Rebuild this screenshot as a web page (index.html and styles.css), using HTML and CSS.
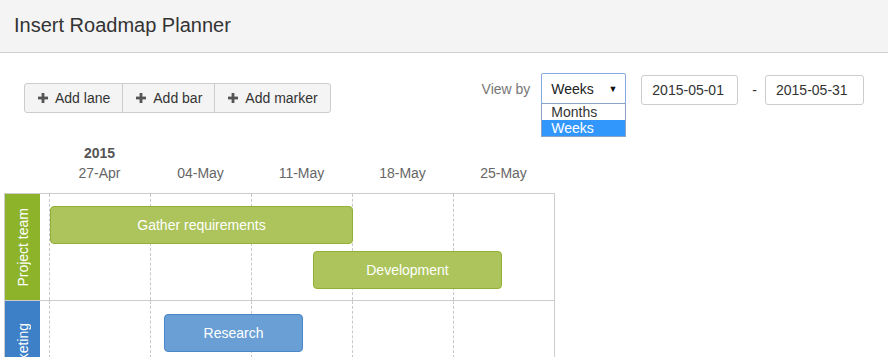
FILE: index.html
```html
<!DOCTYPE html>
<html>
<head>
<meta charset="utf-8">
<title>Insert Roadmap Planner</title>
<link rel="stylesheet" href="styles.css">
</head>
<body>
<header class="top">Insert Roadmap Planner</header>
<main class="main">
  <div class="toolbar">
    <div class="btn-group">
      <button class="btn"><svg class="plus" viewBox="0 0 10 10"><rect x="3.6" y="0" width="2.8" height="10"/><rect x="0" y="3.6" width="10" height="2.8"/></svg>Add lane</button>
      <button class="btn"><svg class="plus" viewBox="0 0 10 10"><rect x="3.6" y="0" width="2.8" height="10"/><rect x="0" y="3.6" width="10" height="2.8"/></svg>Add bar</button>
      <button class="btn"><svg class="plus" viewBox="0 0 10 10"><rect x="3.6" y="0" width="2.8" height="10"/><rect x="0" y="3.6" width="10" height="2.8"/></svg>Add marker</button>
    </div>
    <div class="controls">
      <span class="label">View by</span>
      <div class="select">
        <span>Weeks</span><span class="arrow">▼</span>
        <ul class="options">
          <li>Months</li>
          <li class="selected">Weeks</li>
        </ul>
      </div>
      <div class="date date-from">2015-05-01</div>
      <span class="dash">-</span>
      <div class="date date-to">2015-05-31</div>
    </div>
  </div>

  <div class="scale">
    <div class="scale-row">
      <div class="year">2015</div><div></div><div></div><div></div><div></div>
    </div>
    <div class="scale-row">
      <div>27-Apr</div><div>04-May</div><div>11-May</div><div>18-May</div><div>25-May</div>
    </div>
  </div>

  <div class="grid">
    <div class="lane">
      <div class="lane-label green"><span>Project team</span></div>
      <div class="lane-area">
        <div class="cols"><div></div><div></div><div></div><div></div><div></div></div>
        <div class="bars">
          <div class="bar green-bar" style="margin-left:10px;width:303px">Gather requirements</div>
          <div class="bar green-bar" style="margin-left:273px;width:189px">Development</div>
        </div>
      </div>
    </div>
    <div class="lane">
      <div class="lane-label blue"><span>Marketing</span></div>
      <div class="lane-area">
        <div class="cols"><div></div><div></div><div></div><div></div><div></div></div>
        <div class="bars bars-2">
          <div class="bar blue-bar" style="margin-left:124px;width:139px">Research</div>
        </div>
      </div>
    </div>
  </div>
</main>
</body>
</html>
```
FILE: styles.css
```css
* { box-sizing: border-box; }
html, body {
  margin: 0;
  padding: 0;
  height: 357px;
  overflow: hidden;
  background: #fff;
  font-family: "Liberation Sans", Arial, sans-serif;
  font-size: 14px;
  color: #333;
}
.top {
  height: 53px;
  background: #f4f4f4;
  border-bottom: 1px solid #cfcfcf;
  padding: 14px 0 0 14px;
  font-size: 20px;
  line-height: 23px;
  color: #333;
}
.toolbar {
  display: flex;
  justify-content: space-between;
  align-items: flex-start;
  padding: 20px 24px 0 24px;
}
.btn-group {
  display: flex;
  margin-top: 10px;
  border: 1px solid #ccc;
  border-radius: 3px;
  background: #f4f4f4;
  height: 30px;
}
.btn {
  display: flex;
  align-items: center;
  gap: 7px;
  border: 0;
  border-left: 1px solid #ccc;
  background: transparent;
  font-family: inherit;
  font-size: 14px;
  color: #333;
  padding: 0 12px 0 13px;
  height: 28px;
  margin: 0;
}
.btn:first-child { border-left: 0; }
.plus { width: 10px; height: 10px; fill: #555; }
.controls {
  display: flex;
  align-items: flex-start;
}
.label {
  color: #777;
  margin-top: 8px;
  margin-right: 11px;
}
.select {
  position: relative;
  width: 85px;
  height: 31px;
  border: 1px solid #86a9df;
  border-radius: 2px;
  display: flex;
  align-items: center;
  justify-content: space-between;
  padding: 1px 8px 0 9px;
  color: #222;
}
.arrow { font-size: 9px; color: #111; }
.options {
  position: absolute;
  left: -1px;
  top: 29px;
  width: 85px;
  margin: 0;
  padding: 0;
  list-style: none;
  background: #fff;
  border: 1px solid #8ba3c4;
  z-index: 5;
}
.options li {
  height: 16px;
  line-height: 16px;
  padding-left: 9px;
  color: #333;
}
.options li.selected { background: #3297fd; color: #fff; }
.date {
  margin-top: 2px;
  height: 30px;
  border: 1px solid #ccc;
  border-radius: 3px;
  padding: 6px 0 0 10px;
  color: #333;
}
.date-from { width: 97px; margin-left: 15px; }
.date-to { width: 99px; }
.dash { margin: 9px 8px 0 14px; color: #333; }
.scale {
  margin-top: 30px;
  padding-left: 49px;
}
.scale-row {
  display: grid;
  grid-template-columns: repeat(5, 101px);
  line-height: 20px;
  color: #666;
  text-align: center;
}
.year { font-weight: bold; color: #555; }
.grid {
  margin: 10px 0 0 4px;
  width: 551px;
  border: 1px solid #ccc;
  border-bottom: 0;
}
.lane {
  display: flex;
  height: 107px;
  border-bottom: 1px solid #ccc;
}
.lane-label {
  width: 35px;
  display: flex;
  align-items: center;
  justify-content: center;
  color: #fff;
}
.lane-label span {
  writing-mode: vertical-rl;
  transform: rotate(180deg);
  white-space: nowrap;
}
.green { background: #8db32b; }
.blue { background: #3d80c7; }
.lane-area {
  position: relative;
  flex: 1;
}
.cols {
  position: absolute;
  top: 0;
  bottom: 0;
  left: 9px;
  right: 0;
  display: grid;
  grid-template-columns: repeat(5, 101px);
}
.cols div { border-left: 1px dashed #c8c8c8; }
.bars {
  position: relative;
  display: flex;
  flex-direction: column;
  gap: 7px;
  padding-top: 12px;
}
.bars-2 { padding-top: 13px; }
.bar {
  height: 38px;
  border-radius: 4px;
  color: #fff;
  display: flex;
  align-items: center;
  justify-content: center;
  border: 1px solid;
}
.green-bar { background: #acc45b; border-color: #93b035; }
.blue-bar { background: #6a9fd5; border-color: #4a86c8; }
```
